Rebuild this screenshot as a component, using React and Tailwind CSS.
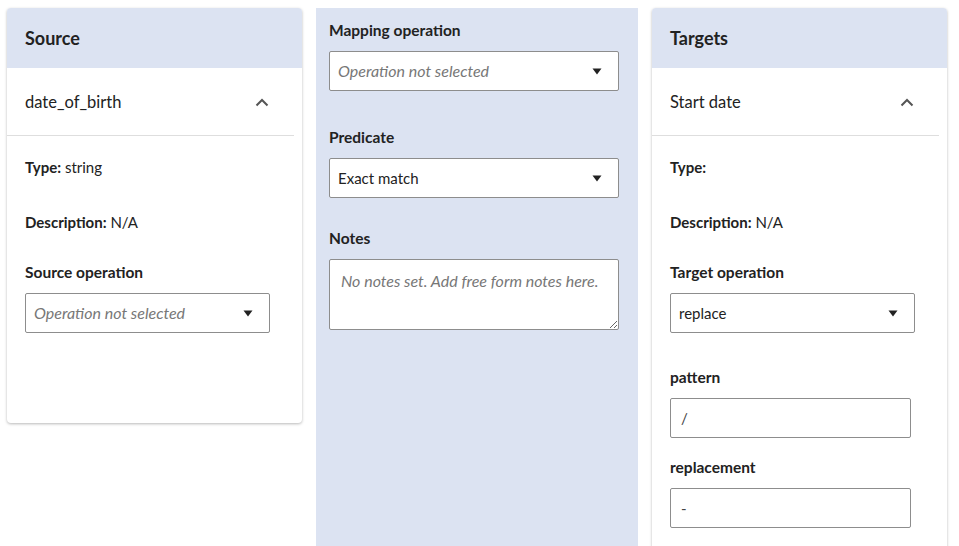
import React from 'react';

const font = { fontFamily: '"Source Sans Pro", Lato, "Liberation Sans", sans-serif' };

const ChevronUp = () => (
    <svg width="14" height="9" viewBox="0 0 14 9" fill="none">
        <path d="M1.5 7.5L7 2l5.5 5.5" stroke="#555" strokeWidth="2" />
    </svg>
);

const Caret = () => (
    <svg width="10" height="7" viewBox="0 0 10 7">
        <path d="M0.5 0.5h9L5 6.5z" fill="#222" />
    </svg>
);

const SelectBox = ({ value, placeholder, className = '' }) => (
    <div className={`flex items-center justify-between h-[40px] bg-white border border-[#8d8d8d] rounded-[2px] pl-[8px] pr-[16px] ${className}`}>
        {value ? (
            <span className="text-[15px] text-[#222]">{value}</span>
        ) : (
            <span className="text-[16px] italic text-[#777]">{placeholder}</span>
        )}
        <Caret />
    </div>
);

const TextInput = ({ value }) => (
    <div className="flex items-center h-[40px] w-[241px] bg-white border border-[#8d8d8d] rounded-[2px] pl-[10px]">
        <span className="text-[15px] text-[#444]">{value}</span>
    </div>
);

const Label = ({ children, className = '' }) => (
    <div className={`text-[15.5px] font-bold text-[#222] leading-[20px] ${className}`}>{children}</div>
);

const Field = ({ label, value }) => (
    <div className="text-[15px] leading-[20px] text-[#222]">
        <span className="font-bold">{label}</span>{value ? ` ${value}` : ''}
    </div>
);

const Card = ({ title, item, children, className = '' }) => (
    <div className={`w-[295px] bg-white rounded-[4px] shadow-[0_1px_3px_rgba(0,0,0,0.28)] overflow-hidden ${className}`}>
        <div className="h-[60px] bg-[#dce3f2] flex items-center px-[18px]">
            <h2 className="text-[18px] font-bold text-[#222]">{title}</h2>
        </div>
        <div className="mr-[8px] border-b border-[#dedede] h-[68px] flex items-center justify-between pl-[18px] pr-[25px] pt-[1px]">
            <span className="text-[16.5px] text-[#222]">{item}</span>
            <ChevronUp />
        </div>
        <div className="px-[18px]">{children}</div>
    </div>
);

export default function App() {
    return (
        <div className="min-h-screen bg-white" style={font}>
            <div className="flex gap-[14px] pl-[7px] pt-[8px] h-[546px] overflow-hidden">
                <Card title="Source" item="date_of_birth" className="h-[415px]">
                    <div className="pt-[21px]">
                        <Field label="Type:" value="string" />
                        <div className="mt-[35px]">
                            <Field label="Description:" value="N/A" />
                        </div>
                        <Label className="mt-[30px]">Source operation</Label>
                        <SelectBox placeholder="Operation not selected" className="mt-[11px] w-[245px]" />
                    </div>
                </Card>

                <div className="w-[322px] bg-[#dce3f2] px-[13px] pt-[12px] h-[560px]">
                    <Label>Mapping operation</Label>
                    <SelectBox placeholder="Operation not selected" className="mt-[11px] w-[290px]" />
                    <Label className="mt-[36px]">Predicate</Label>
                    <SelectBox value="Exact match" className="mt-[11px] w-[290px]" />
                    <Label className="mt-[30px]">Notes</Label>
                    <textarea
                        className="mt-[11px] w-[290px] h-[71px] block bg-white border border-[#8d8d8d] rounded-[2px] px-[11px] py-[9px] text-[16px] italic placeholder:text-[#777] resize-y outline-none"
                        placeholder="No notes set. Add free form notes here."
                        style={font}
                    />
                </div>

                <Card title="Targets" item="Start date" className="h-[560px]">
                    <div className="pt-[21px]">
                        <Field label="Type:" />
                        <div className="mt-[35px]">
                            <Field label="Description:" value="N/A" />
                        </div>
                        <Label className="mt-[30px]">Target operation</Label>
                        <SelectBox value="replace" className="mt-[11px] w-[245px]" />
                        <Label className="mt-[34px]">pattern</Label>
                        <div className="mt-[11px]">
                            <TextInput value="/" />
                        </div>
                        <Label className="mt-[19px]">replacement</Label>
                        <div className="mt-[11px]">
                            <TextInput value="-" />
                        </div>
                    </div>
                </Card>
            </div>
        </div>
    );
}
